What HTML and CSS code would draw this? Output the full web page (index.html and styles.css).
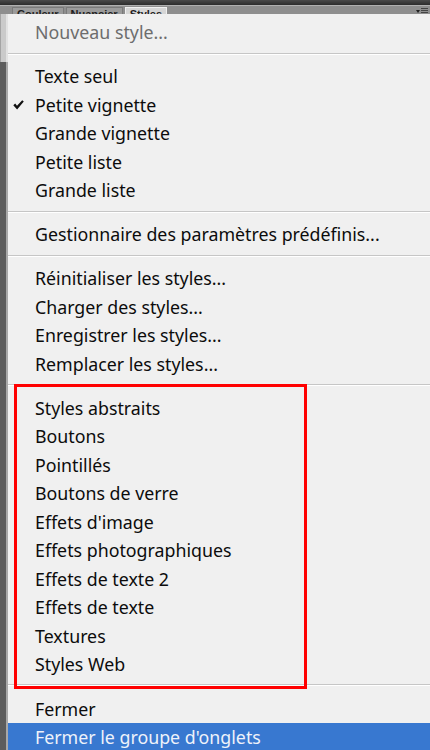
FILE: index.html
```html
<!DOCTYPE html>
<html lang="fr">
<head>
<meta charset="utf-8">
<title>Styles</title>
<link rel="stylesheet" href="styles.css">
</head>
<body>
<div class="page">
  <div class="topbar"></div>
  <div class="tabsrow">
    <span class="tab">Couleur</span>
    <span class="tab">Nuancier</span>
    <span class="tab active">Styles</span>
    <span class="panelmenu">
      <svg width="12" height="6" viewBox="0 0 12 6"><path d="M0 2 L4 2 L2 5 Z" fill="#222"/><rect x="5" y="0" width="7" height="1" fill="#444"/><rect x="5" y="2" width="7" height="1" fill="#444"/><rect x="5" y="4" width="7" height="1" fill="#444"/></svg>
    </span>
  </div>
  <div class="main">
    <div class="strip">
      <div class="strip-top"></div>
      <div class="strip-bottom"></div>
    </div>
    <div class="menu">
      <div class="item disabled">Nouveau style...</div>
      <div class="sep"></div>
      <div class="item">Texte seul</div>
      <div class="item checked">
        <svg class="check" width="11" height="10" viewBox="0 0 11 10"><path d="M0.3 5.2 L2.2 3.6 L4 5.8 L9.2 0.2 L10.8 1.6 L4.1 9.6 Z" fill="#111"/></svg>
        Petite vignette
      </div>
      <div class="item">Grande vignette</div>
      <div class="item">Petite liste</div>
      <div class="item">Grande liste</div>
      <div class="sep"></div>
      <div class="item">Gestionnaire des paramètres prédéfinis...</div>
      <div class="sep"></div>
      <div class="item">Réinitialiser les styles...</div>
      <div class="item">Charger des styles...</div>
      <div class="item">Enregistrer les styles...</div>
      <div class="item">Remplacer les styles...</div>
      <div class="sep"></div>
      <div class="item">Styles abstraits</div>
      <div class="item">Boutons</div>
      <div class="item">Pointillés</div>
      <div class="item">Boutons de verre</div>
      <div class="item">Effets d'image</div>
      <div class="item">Effets photographiques</div>
      <div class="item">Effets de texte 2</div>
      <div class="item">Effets de texte</div>
      <div class="item">Textures</div>
      <div class="item">Styles Web</div>
      <div class="sep last"></div>
      <div class="item">Fermer</div>
      <div class="item selected">Fermer le groupe d'onglets</div>
    </div>
  </div>
  <div class="redbox"></div>
</div>
</body>
</html>
```
FILE: styles.css
```css
html, body {
  margin: 0;
  padding: 0;
}
body {
  background: #f0f0f0;
  font-family: "Noto Sans", "Open Sans", sans-serif;
}
.page {
  position: relative;
  width: 430px;
  height: 750px;
  overflow: hidden;
  display: flex;
  flex-direction: column;
}
.topbar {
  height: 5px;
  background: linear-gradient(#4a4a4a, #2c2c2c);
}
.tabsrow {
  height: 9px;
  background: #8e8e8e;
  border-top: 1px solid #b0b0b0;
  box-sizing: border-box;
  display: flex;
  align-items: flex-start;
  padding-left: 12px;
  overflow: hidden;
}
.tab {
  margin-top: 1px;
  padding: 0 4px;
  margin-right: 2px;
  height: 16px;
  font-family: "Liberation Sans", Arial, sans-serif;
  font-size: 11px;
  font-weight: bold;
  line-height: 13px;
  color: #1e1e1e;
  background: #9b9b9b;
  border: 1px solid #7a7a7a;
  border-bottom: none;
}
.tab.active {
  background: #d6d6d6;
  border-color: #f0f0f0;
}
.panelmenu {
  margin-left: auto;
  margin-right: 2px;
  margin-top: 2px;
  line-height: 0;
}
.main {
  flex: 1;
  display: flex;
  min-height: 0;
}
.strip {
  width: 8px;
  display: flex;
  flex-direction: column;
  flex-shrink: 0;
}
.strip-top {
  height: 48px;
  background: #cacaca;
  border-left: 1px solid #a4a4a4;
  border-right: 2px solid #e2e2e2;
  box-sizing: border-box;
}
.strip-bottom {
  flex: 1;
  background: #5c5c5c;
  border-right: 2px solid #a8a8a8;
  box-sizing: border-box;
}
.menu {
  flex: 1;
  background: #f0f0f0;
  padding-top: 4px;
  display: flex;
  flex-direction: column;
}
.item {
  position: relative;
  height: 28.5px;
  line-height: 28.5px;
  padding-left: 27px;
  font-size: 17.8px;
  color: #0c0c0c;
  white-space: nowrap;
  flex-shrink: 0;
}
.item.disabled {
  color: #6d6d6d;
}
.item.selected {
  background: #3878d0;
  color: #eef2fa;
}
.check {
  position: absolute;
  left: 5px;
  top: 9px;
}
.sep {
  flex-shrink: 0;
  height: 15.5px;
  box-sizing: border-box;
  padding-top: 6px;
}
.sep.last {
  height: 16px;
  padding-top: 5.5px;
}
.sep::before {
  content: "";
  display: block;
  height: 1px;
  background: #c6c6c6;
  border-bottom: 1px solid #ffffff;
}
.redbox {
  position: absolute;
  left: 14px;
  top: 384px;
  width: 293px;
  height: 305px;
  border: 3px solid #ff0000;
  box-sizing: border-box;
  pointer-events: none;
}
```
